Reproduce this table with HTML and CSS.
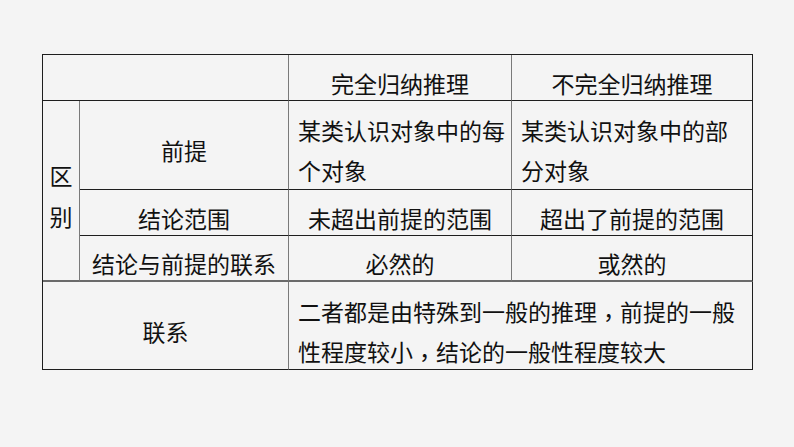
FILE: index.html
```html
<!DOCTYPE html>
<html lang="zh-CN">
<head>
<meta charset="utf-8">
<link rel="stylesheet" href="styles.css">
</head>
<body>
<div class="page">
  <div class="grid">
    <div class="cell c12 r1"></div>
    <div class="cell c3 r1"><span>完全归纳推理</span></div>
    <div class="cell c4 r1 edge"><span>不完全归纳推理</span></div>

    <div class="cell c1 r234 sep"><span class="vert">区<br>别</span></div>
    <div class="cell c2 r2"><span>前提</span></div>
    <div class="cell c3 r2 left"><span class="ml">某类认识对象中的每<br>个对象</span></div>
    <div class="cell c4 r2 left edge"><span class="ml">某类认识对象中的部<br>分对象</span></div>

    <div class="cell c2 r3"><span>结论范围</span></div>
    <div class="cell c3 r3"><span>未超出前提的范围</span></div>
    <div class="cell c4 r3 edge"><span>超出了前提的范围</span></div>

    <div class="cell c2 r4 sep"><span>结论与前提的联系</span></div>
    <div class="cell c3 r4 sep"><span>必然的</span></div>
    <div class="cell c4 r4 sep edge"><span>或然的</span></div>

    <div class="cell c12 r5"><span>联系</span></div>
    <div class="cell c34 r5 left edge"><span class="ml">二者都是由特殊到一般的推理<span class="punct" lang="zh-TW">，</span>前提的一般<br>性程度较小<span class="punct" lang="zh-TW">，</span>结论的一般性程度较大</span></div>
  </div>
</div>
</body>
</html>
```

FILE: styles.css
```css
html, body {
  margin: 0;
  padding: 0;
  background: #f4f4f4;
}
.page {
  width: 794px;
  height: 447px;
  padding: 54px 0 0 42px;
  box-sizing: border-box;
  font-family: "Noto Sans CJK SC", "Noto Sans", sans-serif;
  font-size: 23px;
  color: #111;
}
.grid {
  display: grid;
  grid-template-columns: 37px 209px 223px 241px;
  grid-template-rows: 46px 89px 46px 46px 88px;
  width: 711px;
  box-sizing: border-box;
  border-top: 1px solid #1e1e1e;
  border-left: 1px solid #1e1e1e;
}
.cell {
  box-sizing: border-box;
  border-right: 1px solid #7a7a7a;
  border-bottom: 1px solid #1e1e1e;
  display: flex;
  align-items: center;
  justify-content: center;
  padding-top: 10px;
  line-height: 40px;
  white-space: nowrap;
}
.cell.left {
  justify-content: flex-start;
  padding-left: 9px;
}
.cell.edge { border-right-color: #1e1e1e; }
.cell.sep { border-bottom: 2px solid #6a6a6a; }
.r5 { border-bottom-color: #1e1e1e; }
.ml { line-height: 40px; }
.vert { line-height: 41px; text-align: center; }
.punct {
  font-family: "Noto Sans CJK TC", "Noto Sans CJK SC", sans-serif;
  position: relative;
  top: 5px;
}

.c1 { grid-column: 1; }
.c2 { grid-column: 2; }
.c3 { grid-column: 3; }
.c4 { grid-column: 4; }
.c12 { grid-column: 1 / 3; }
.c34 { grid-column: 3 / 5; }
.r1 { grid-row: 1; }
.r2 { grid-row: 2; }
.r3 { grid-row: 3; }
.r4 { grid-row: 4; }
.r5 { grid-row: 5; }
.r234 { grid-row: 2 / 5; }
```
